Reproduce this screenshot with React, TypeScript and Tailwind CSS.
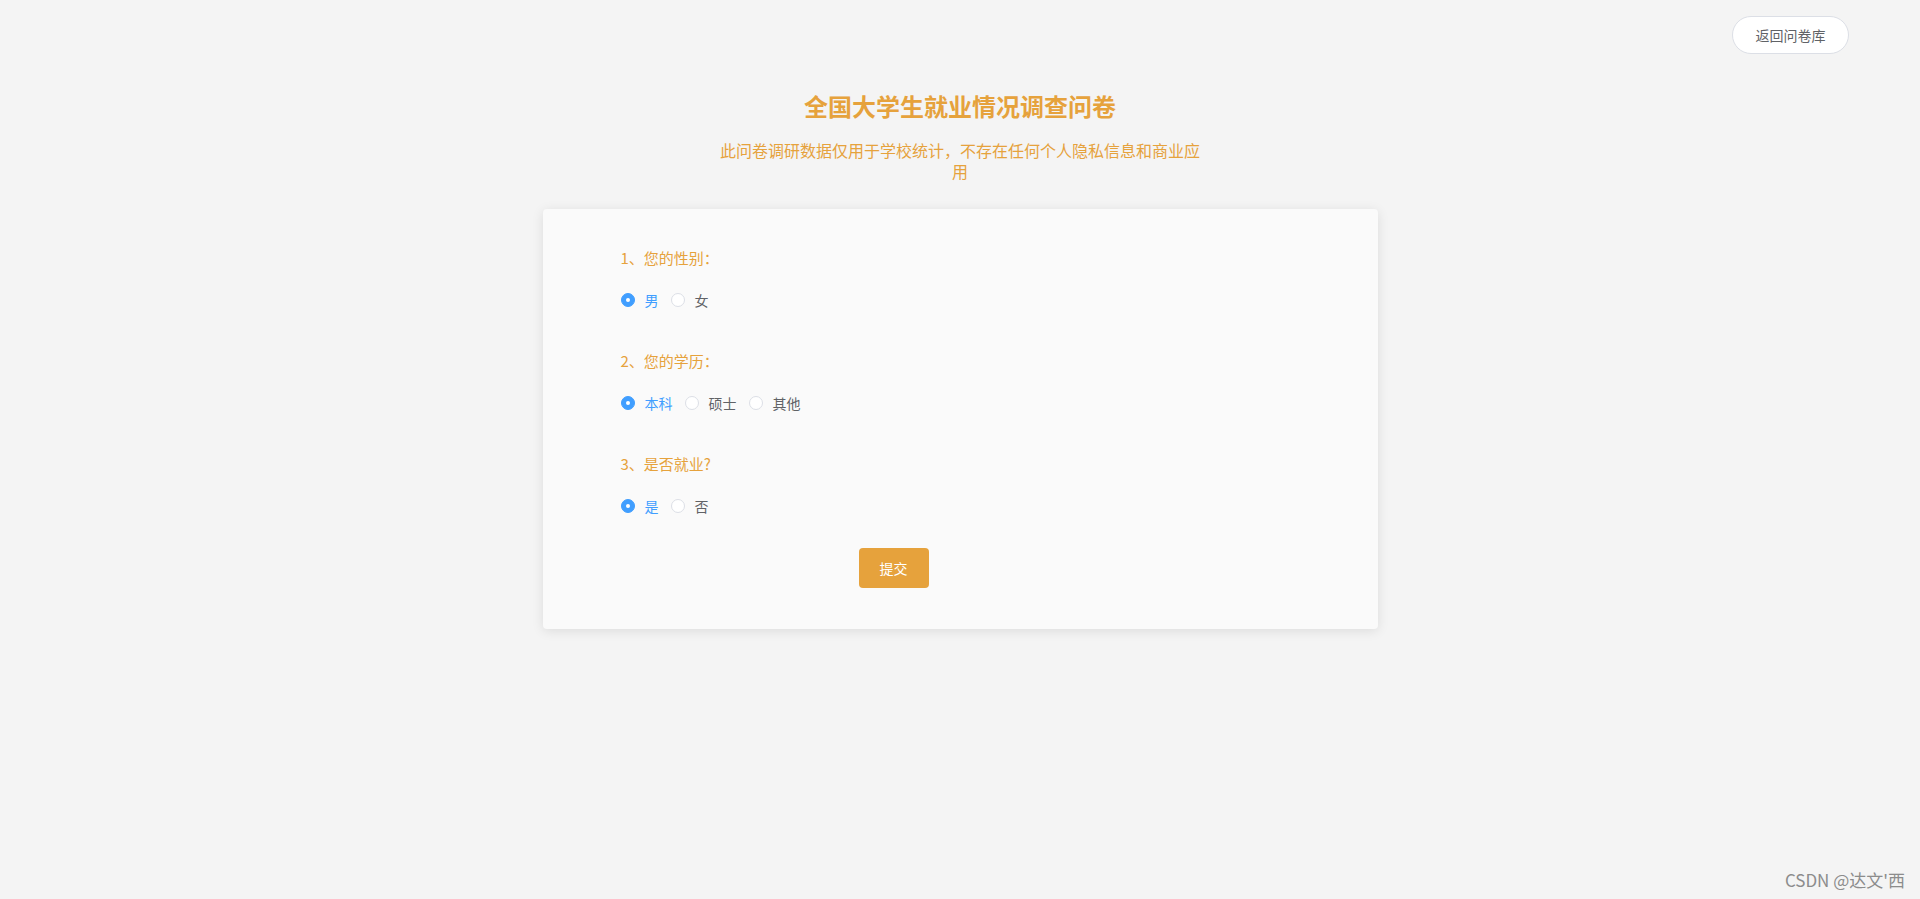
import { useState } from 'react'

type Question = {
  id: string
  title: string
  options: string[]
}

const QUESTIONS: Question[] = [
  { id: 'gender', title: '1、您的性别：', options: ['男', '女'] },
  { id: 'degree', title: '2、您的学历：', options: ['本科', '硕士', '其他'] },
  { id: 'employed', title: '3、是否就业?', options: ['是', '否'] },
]

function Radio({
  label,
  checked,
  onSelect,
}: {
  label: string
  checked: boolean
  onSelect: () => void
}) {
  return (
    <label
      className="mr-[12px] flex h-5 cursor-pointer items-center text-sm leading-5"
      onClick={onSelect}
    >
      <span
        className={
          checked
            ? 'flex h-[14px] w-[14px] items-center justify-center rounded-full border border-[#409eff] bg-[#409eff]'
            : 'flex h-[14px] w-[14px] items-center justify-center rounded-full border border-[#dcdfe6] bg-white'
        }
      >
        {checked && <span className="h-1 w-1 rounded-full bg-white" />}
      </span>
      <span className={checked ? 'pl-[10px] text-[#409eff]' : 'pl-[10px] text-[#606266]'}>
        {label}
      </span>
    </label>
  )
}

export default function App() {
  const [answers, setAnswers] = useState<Record<string, string>>({
    gender: '男',
    degree: '本科',
    employed: '是',
  })

  return (
    <div
      className="relative min-h-screen bg-[#f4f4f4]"
      style={{ fontFamily: '"Noto Sans CJK SC", "Noto Sans", sans-serif' }}
    >
      <div className="flex justify-end pr-[71px] pt-4">
        <button className="h-[38px] w-[117px] rounded-full border border-[#dcdfe6] bg-white text-sm text-[#606266]">
          返回问卷库
        </button>
      </div>

      <h1 className="mt-[36px] text-center text-2xl font-bold leading-8 text-[#e6a23c]">
        全国大学生就业情况调查问卷
      </h1>
      <p className="mx-auto mt-[18px] w-[484px] text-center text-base leading-[21px] text-[#e6a23c]">
        此问卷调研数据仅用于学校统计，不存在任何个人隐私信息和商业应用
      </p>

      <div className="mx-auto mt-[27px] w-[835px] rounded bg-[#fafafa] pb-[41px] pl-[78px] pt-[39px] shadow-[0_2px_12px_0_rgba(0,0,0,0.1)]">
        <div className="flex flex-col gap-[41px]">
          {QUESTIONS.map((q) => (
            <div key={q.id}>
              <div className="mb-[22px] text-[15px] leading-5 text-[#e6a23c]">{q.title}</div>
              <div className="flex items-center">
                {q.options.map((opt) => (
                  <Radio
                    key={opt}
                    label={opt}
                    checked={answers[q.id] === opt}
                    onSelect={() => setAnswers({ ...answers, [q.id]: opt })}
                  />
                ))}
              </div>
            </div>
          ))}
        </div>
        <button className="ml-[238px] mt-[32px] h-10 w-[70px] rounded bg-[#e6a23c] text-sm text-white">
          提交
        </button>
      </div>

      <div className="absolute bottom-[7px] right-[15px] text-[17px] text-[#8c8c8c]">
        CSDN @达文'西
      </div>
    </div>
  )
}
